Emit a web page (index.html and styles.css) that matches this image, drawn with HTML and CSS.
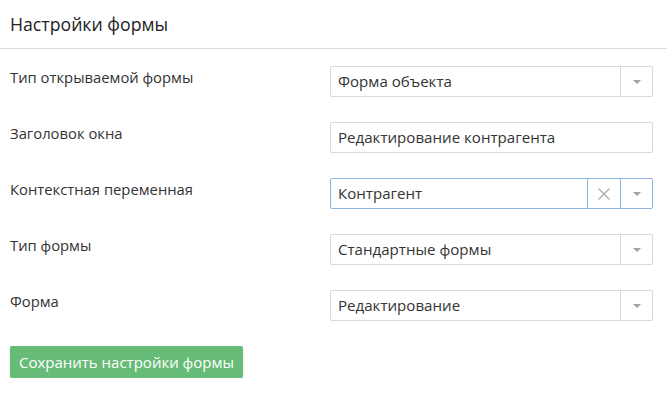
FILE: index.html
```html
<!DOCTYPE html>
<html lang="ru">
<head>
<meta charset="utf-8">
<link rel="stylesheet" href="styles.css">
</head>
<body>
<div class="header"><h1 class="title">Настройки формы</h1></div>
<div class="form">
  <div class="row">
    <div class="label">Тип открываемой формы</div>
    <div class="field select">
      <div class="value">Форма объекта</div>
      <div class="arrow"><span class="tri"></span></div>
    </div>
  </div>
  <div class="row">
    <div class="label">Заголовок окна</div>
    <div class="field">
      <div class="value">Редактирование контрагента</div>
    </div>
  </div>
  <div class="row">
    <div class="label">Контекстная переменная</div>
    <div class="field select focused">
      <div class="value">Контрагент</div>
      <div class="clear"><svg width="14" height="14" viewBox="0 0 14 14"><path d="M1.5 1.5L12.5 12.5M12.5 1.5L1.5 12.5" stroke="#a8a8a8" stroke-width="1.1" fill="none"/></svg></div>
      <div class="arrow"><span class="tri"></span></div>
    </div>
  </div>
  <div class="row">
    <div class="label">Тип формы</div>
    <div class="field select">
      <div class="value">Стандартные формы</div>
      <div class="arrow"><span class="tri"></span></div>
    </div>
  </div>
  <div class="row">
    <div class="label">Форма</div>
    <div class="field select">
      <div class="value">Редактирование</div>
      <div class="arrow"><span class="tri"></span></div>
    </div>
  </div>
  <button class="save">Сохранить настройки формы</button>
</div>
</body>
</html>
```
FILE: styles.css
```css
html, body {
  margin: 0;
  padding: 0;
  background: #fff;
}
body {
  font-family: "Open Sans", "Noto Sans", sans-serif;
  color: #333;
  width: 667px;
}
.header {
  height: 48px;
  border-bottom: 1px solid #dcdcdc;
  display: flex;
  align-items: center;
  padding: 0 10px;
}
.title {
  margin: 0;
  font-size: 17.7px;
  font-weight: 400;
  line-height: 24px;
  color: #222;
}
.form {
  padding: 17px 14px 0 10px;
  display: flex;
  flex-direction: column;
  gap: 25px;
}
.row {
  display: flex;
  align-items: flex-start;
}
.label {
  width: 320px;
  flex: none;
  font-size: 14.8px;
  line-height: 20px;
  padding-top: 1px;
  color: #333;
}
.field {
  flex: 1;
  height: 31px;
  box-sizing: border-box;
  border: 1px solid #d9d9d9;
  border-radius: 2px;
  display: flex;
  align-items: stretch;
}
.field.focused {
  border-color: #8cb5df;
}
.value {
  flex: 1;
  padding-left: 7px;
  font-size: 15.1px;
  line-height: 29px;
  color: #333;
  white-space: nowrap;
}
.arrow, .clear {
  width: 31px;
  border-left: 1px solid #d9d9d9;
  display: flex;
  align-items: center;
  justify-content: center;
}
.clear {
  width: 32px;
}
.focused .arrow, .focused .clear {
  border-left-color: #8cb5df;
}
.tri {
  width: 0;
  height: 0;
  border-left: 4px solid transparent;
  border-right: 4px solid transparent;
  border-top: 4px solid #a3a3a3;
}
.save {
  align-self: flex-start;
  width: 233px;
  height: 32px;
  border: none;
  border-radius: 2px;
  background: #66bb77;
  color: #fff;
  font-family: "Open Sans", "Noto Sans", sans-serif;
  font-size: 15px;
  padding: 0;
  box-shadow: 0 1px 2px rgba(0,0,0,0.18);
}
```
